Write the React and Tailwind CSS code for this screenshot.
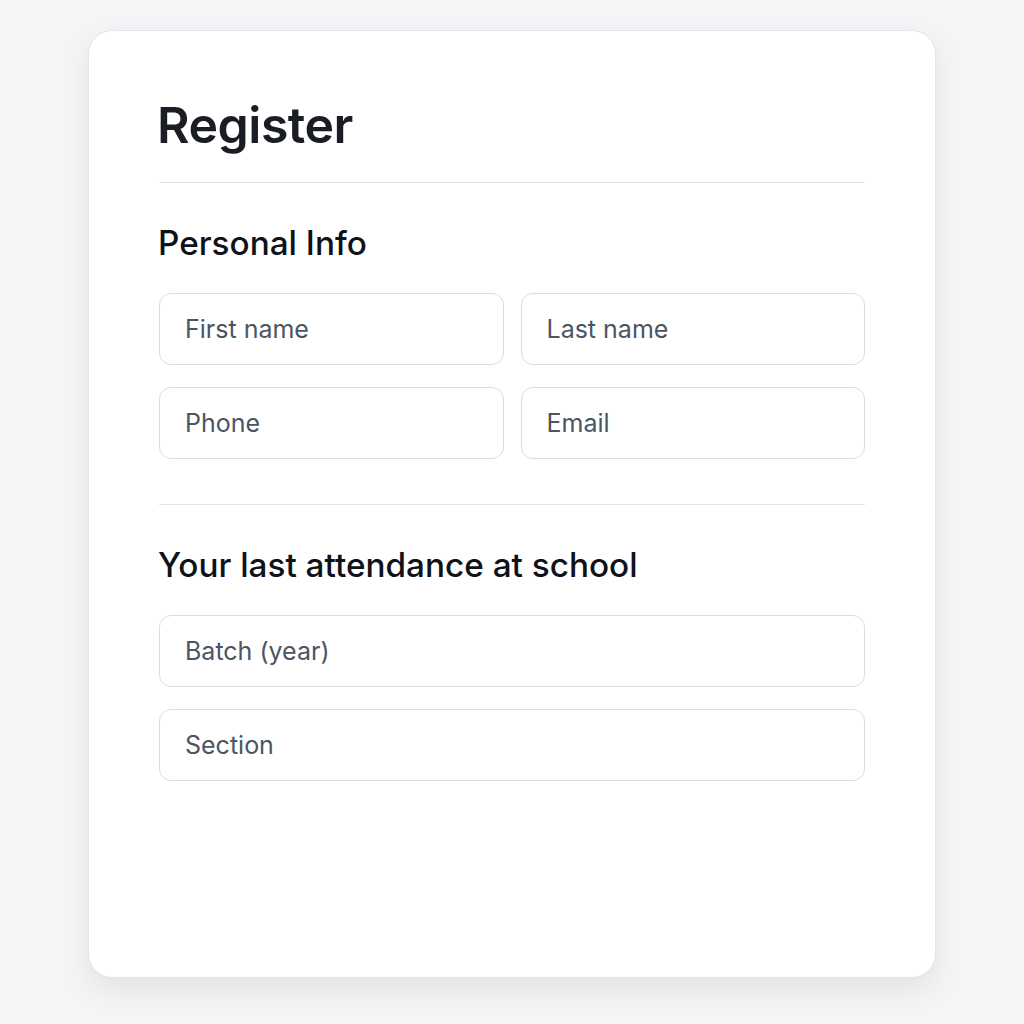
export default function App() {
  const inputCls =
    'h-[72px] w-full rounded-[12px] border border-[#d9dde3] bg-white px-[25px] text-[25px] text-[#374151] placeholder:text-[#4b5563] outline-none';

  return (
    <div className="min-h-screen bg-[#f4f5f7] pt-[30px]" style={{ fontFamily: 'Inter, "Noto Sans", sans-serif' }}>
      <div className="mx-auto h-[948px] w-[848px] rounded-[24px] border border-[#e3e5e9] bg-white px-[70px] pt-[64px] shadow-[0_12px_30px_rgba(0,0,0,0.08)]">
        <h1 className="-ml-[2px] text-[50px] font-semibold leading-[60px] tracking-[-0.5px] text-[#1a1d24]">Register</h1>
        <div className="mt-[27px] h-px bg-[#e2e4e8]" />

        <h2 className="-ml-[1px] mt-[40px] text-[33.3px] font-medium leading-[40px] text-[#0f1218]">Personal Info</h2>
        <div className="mt-[30px] grid grid-cols-2 gap-x-[17px] gap-y-[22px]">
          <input className={inputCls} placeholder="First name" />
          <input className={inputCls} placeholder="Last name" />
          <input className={inputCls} placeholder="Phone" />
          <input className={inputCls} placeholder="Email" />
        </div>

        <div className="mt-[45px] h-px bg-[#e2e4e8]" />

        <h2 className="-ml-[1px] mt-[40px] text-[33.3px] font-medium leading-[40px] text-[#0f1218]">Your last attendance at school</h2>
        <div className="mt-[30px] flex flex-col gap-[22px]">
          <input className={inputCls} placeholder="Batch (year)" />
          <input className={inputCls} placeholder="Section" />
        </div>
      </div>
    </div>
  );
}
